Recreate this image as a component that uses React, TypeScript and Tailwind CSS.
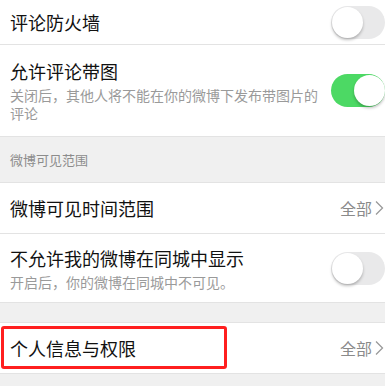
import React from "react";

const font = { fontFamily: '"Noto Sans CJK SC", "Noto Sans", sans-serif' };

function Toggle({ on }: { on: boolean }) {
  return (
    <div
      className={
        "relative h-[33px] w-[54px] shrink-0 rounded-full " +
        (on ? "bg-[#4cd964]" : "bg-[#e9e9ea]")
      }
    >
      <div
        className={
          "absolute top-[1px] h-[31px] w-[31px] rounded-full bg-white shadow-[0_2px_3px_rgba(0,0,0,0.25)] " +
          (on ? "right-0" : "left-[1px]")
        }
      />
    </div>
  );
}

function Value() {
  return (
    <div className="flex items-center gap-[3px] text-[16px] text-[#8a8a8a]">
      <span>全部</span>
      <svg width="9" height="16" viewBox="0 0 9 16" fill="none">
        <path d="M1 1.5 L7.5 8 L1 14.5" stroke="#9a9a9a" strokeWidth="1.3" />
      </svg>
    </div>
  );
}

export default function App() {
  return (
    <div className="w-[385px] h-[386px] overflow-hidden bg-[#f0f0f0]" style={font}>
      <div className="flex h-[45px] items-center justify-between bg-white pl-[10px] border-b border-[#e3e3e3]">
        <span className="text-[18px] text-[#111]">评论防火墙</span>
        <Toggle on={false} />
      </div>

      <div className="flex h-[92px] items-center justify-between bg-white pl-[10px] border-b border-[#e3e3e3]">
        <div className="flex flex-col">
          <span className="text-[18px] leading-[24px] text-[#111]">允许评论带图</span>
          <span className="mt-[3px] w-[312px] text-[14px] leading-[18px] text-[#9a9a9a]">
            关闭后，其他人将不能在你的微博下发布带图片的评论
          </span>
        </div>
        <Toggle on={true} />
      </div>

      <div className="flex h-[45px] items-center pl-[10px] text-[13px] text-[#8c8c8c]">
        微博可见范围
      </div>

      <div className="flex h-[52px] items-center justify-between bg-white pl-[10px] pr-[1px] border-y border-[#e3e3e3]">
        <span className="text-[18px] text-[#111]">微博可见时间范围</span>
        <Value />
      </div>

      <div className="flex h-[69px] items-center justify-between bg-white pl-[10px] border-b border-[#e3e3e3]">
        <div className="flex flex-col">
          <span className="text-[18px] leading-[24px] text-[#111]">不允许我的微博在同城中显示</span>
          <span className="mt-[3px] text-[14px] leading-[18px] text-[#9a9a9a]">
            开启后，你的微博在同城中不可见。
          </span>
        </div>
        <Toggle on={false} />
      </div>

      <div className="h-[19px]" />

      <div className="relative flex h-[52px] items-center justify-between bg-white pl-[10px] pr-[1px] border-y border-[#e3e3e3]">
        <span className="text-[18px] text-[#111]">个人信息与权限</span>
        <Value />
        <div className="absolute left-[1px] top-[3px] h-[43px] w-[226px] rounded-[3px] border-[3px] border-[#ff1f1f]" />
      </div>
    </div>
  );
}
